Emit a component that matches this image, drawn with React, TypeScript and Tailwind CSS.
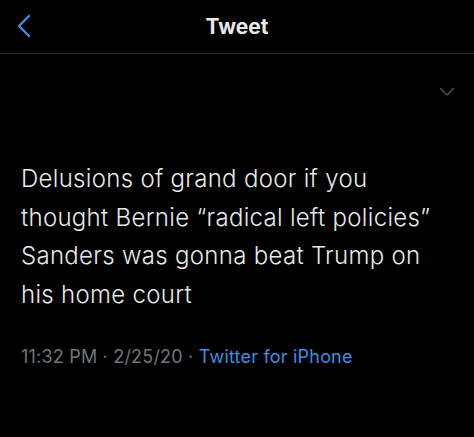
function BackIcon() {
  return (
    <svg width="16" height="24" viewBox="0 0 16 24" fill="none">
      <path d="M13 2 L3 12 L13 22" stroke="#3d8fe0" strokeWidth="2.4" strokeLinecap="round" strokeLinejoin="round" />
    </svg>
  );
}

function ChevronDown() {
  return (
    <svg width="16" height="10" viewBox="0 0 16 10" fill="none">
      <path d="M1.5 1.5 L8 8 L14.5 1.5" stroke="#4a4d52" strokeWidth="1.6" strokeLinecap="round" strokeLinejoin="round" />
    </svg>
  );
}

export default function App() {
  return (
    <div className="w-[474px] h-[437px] bg-black overflow-hidden font-['Inter',sans-serif]">
      <div className="relative flex items-center justify-center h-[54px] border-b border-[#2a2b2e]">
        <div className="absolute left-[16px] top-[14px]">
          <BackIcon />
        </div>
        <h1 className="text-[21px] font-bold text-[#e7e9ea]">Tweet</h1>
      </div>
      <div className="flex justify-end pr-[19px] pt-[33px]">
        <ChevronDown />
      </div>
      <p className="px-[21px] mt-[63px] text-[24px] leading-[38.5px] tracking-[0.3px] text-[#e7e9ea] font-light">
        Delusions of grand door if you
        <br />
        thought Bernie “radical left policies”
        <br />
        Sanders was gonna beat Trump on
        <br />
        his home court
      </p>
      <div className="px-[21px] mt-[29px] text-[18px] tracking-[0.2px] text-[#6e767d]">
        11:32 PM · 2/25/20 · <span className="text-[#3d8fe0]">Twitter for iPhone</span>
      </div>
    </div>
  );
}
